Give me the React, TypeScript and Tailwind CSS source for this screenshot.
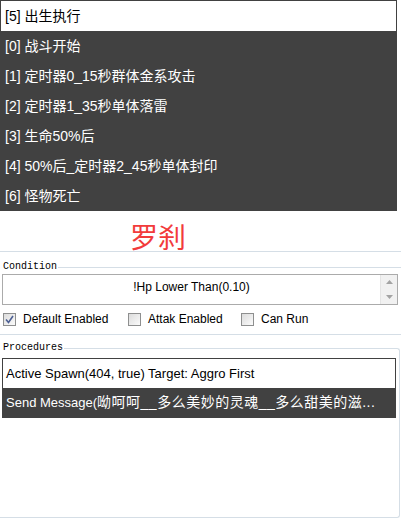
import React from 'react';

const triggers = [
  { id: 5, name: '出生执行' },
  { id: 0, name: '战斗开始' },
  { id: 1, name: '定时器0_15秒群体金系攻击' },
  { id: 2, name: '定时器1_35秒单体落雷' },
  { id: 3, name: '生命50%后' },
  { id: 4, name: '50%后_定时器2_45秒单体封印' },
  { id: 6, name: '怪物死亡' },
];

const font = { fontFamily: '"Liberation Sans", "Noto Sans CJK SC", sans-serif' };
const label = { fontFamily: '"Liberation Mono", "Noto Sans CJK SC", monospace' };

const Check = ({ checked, text }: { checked?: boolean; text: string }) => (
  <div className="flex items-center">
    <div className="w-[13px] h-[13px] border border-[#8e8f8f] bg-gradient-to-br from-[#dcdcdc] to-[#fbfbfb] flex items-center justify-center">
      {checked && (
        <svg width="9" height="9" viewBox="0 0 9 9">
          <path d="M1 4.5 L3.5 7.5 L8 1" fill="none" stroke="#4c5f93" strokeWidth="1.6" />
        </svg>
      )}
    </div>
    <span className="ml-[7px] text-[12px] text-black">{text}</span>
  </div>
);

const App = (): JSX.Element => {
  return (
    <div className="w-[401px] h-[518px] bg-white overflow-hidden relative" style={font}>
      {/* trigger list */}
      <div className="w-[397px] bg-[#414141] pt-px px-px">
        {triggers.map((t, i) => (
          <div
            key={t.id}
            className={
              i === 0
                ? 'h-[30px] bg-white text-black flex items-center pl-[4px] text-[14px]'
                : 'h-[30px] text-white flex items-center pl-[4px] text-[14px]'
            }
          >
            [{t.id}] {t.name}
          </div>
        ))}
      </div>

      <div className="h-[40px] pl-[130px] pt-[14px]">
        <span className="text-[28px] leading-none text-[#f23b3b]">罗刹</span>
      </div>

      {/* condition */}
      <div className="border-t border-[#d5dee6] w-[401px]">
        <div className="flex items-center h-[14px] mt-[8px]">
          <span className="text-[10px] leading-none text-black pl-[3px]" style={label}>
            Condition
          </span>
          <div className="flex-1 h-px bg-[#d5dee6] ml-[1px]" />
        </div>
        <div className="mx-[2px] w-[396px] h-[31px] border border-[#ababab] flex">
          <div className="flex-1 text-center text-[12px] pt-[3px] text-black">!Hp Lower Than(0.10)</div>
          <div className="w-[17px] bg-[#f1f1f1] border-l border-[#e4e4e4] flex flex-col items-center justify-between py-[5px]">
            <svg width="7" height="4" viewBox="0 0 7 4">
              <path d="M0 4 L3.5 0 L7 4 Z" fill="#a3a3a3" />
            </svg>
            <svg width="7" height="4" viewBox="0 0 7 4">
              <path d="M0 0 L3.5 4 L7 0 Z" fill="#a3a3a3" />
            </svg>
          </div>
        </div>
        <div className="flex items-center h-[28px] pl-[3px]">
          <div className="w-[125px]">
            <Check checked text="Default Enabled" />
          </div>
          <div className="w-[113px]">
            <Check text="Attak Enabled" />
          </div>
          <Check text="Can Run" />
        </div>
      </div>

      {/* procedures */}
      <div className="border-t border-[#d5dee6] w-[401px] mt-px">
        <div className="flex items-center h-[14px] mt-[6px]">
          <span className="text-[10px] leading-none text-black pl-[3px]" style={label}>
            Procedures
          </span>
          <div className="flex-1 h-[8px] mt-[7px] ml-[1px] border-t border-r border-[#d5dee6] rounded-tr-[3px] mr-[1px]" />
        </div>
        <div className="border-r border-b border-[#d5dee6] rounded-br-[3px] w-[400px] h-[163px] pt-[3px]">
          <div className="ml-[2px] w-[394px] bg-[#414141] p-px">
            <div className="h-[29px] bg-white text-black flex items-center pl-[3px] text-[13px] whitespace-nowrap">
              Active Spawn(404, true) Target: Aggro First
            </div>
            <div className="h-[29px] text-white flex items-center pl-[3px] text-[13px] whitespace-nowrap">
              Send Message(
              <span className="text-[14px] tracking-[0.5px]">呦呵呵__多么美妙的灵魂__多么甜美的滋...</span>
            </div>
          </div>
        </div>
      </div>
    </div>
  );
};

export default App;
